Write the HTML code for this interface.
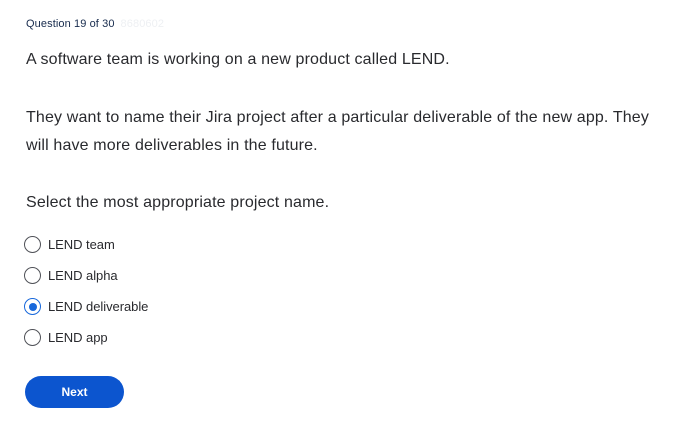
<!DOCTYPE html>
<html><head><style>
body{margin:0;background:#fff;font-family:"Liberation Sans",sans-serif;color:#292a2e;width:688px;height:435px;overflow:hidden;position:relative}
.a{position:absolute;white-space:nowrap}
.hd{left:26px;top:18px;font-size:11px;color:#172b4d;letter-spacing:0.1px}
.hd span{color:#eef0f3;margin-left:6px}
.p{left:26px;font-size:16px;letter-spacing:0.15px;line-height:20px}
.r{left:24px;width:15px;height:15px;border:1.5px solid #505258;border-radius:50%}
.r.on{border-color:#1868db}
.r.on:after{content:"";position:absolute;left:3.5px;top:3.5px;width:8px;height:8px;border-radius:50%;background:#1868db}
.l{left:48px;font-size:13px;letter-spacing:-0.05px;line-height:16px}
.btn{left:25px;top:376px;width:99px;height:32px;border-radius:16px;background:#0c55cf;color:#fff;font-weight:bold;font-size:12px;text-align:center;line-height:32px;letter-spacing:0px}
</style></head><body>
<div class="a hd">Question 19 of 30<span>8680602</span></div>
<div class="a p" style="top:50px">A software team is working on a new product called LEND.</div>
<div class="a p" style="top:108px">They want to name their Jira project after a particular deliverable of the new app. They</div>
<div class="a p" style="top:136px">will have more deliverables in the future.</div>
<div class="a p" style="top:193px">Select the most appropriate project name.</div>
<div class="a r" style="top:236px"></div><div class="a l" style="top:237px">LEND team</div>
<div class="a r" style="top:267px"></div><div class="a l" style="top:268px">LEND alpha</div>
<div class="a r on" style="top:298px"></div><div class="a l" style="top:299px">LEND deliverable</div>
<div class="a r" style="top:329px"></div><div class="a l" style="top:330px">LEND app</div>
<div class="a btn">Next</div>
</body></html>
